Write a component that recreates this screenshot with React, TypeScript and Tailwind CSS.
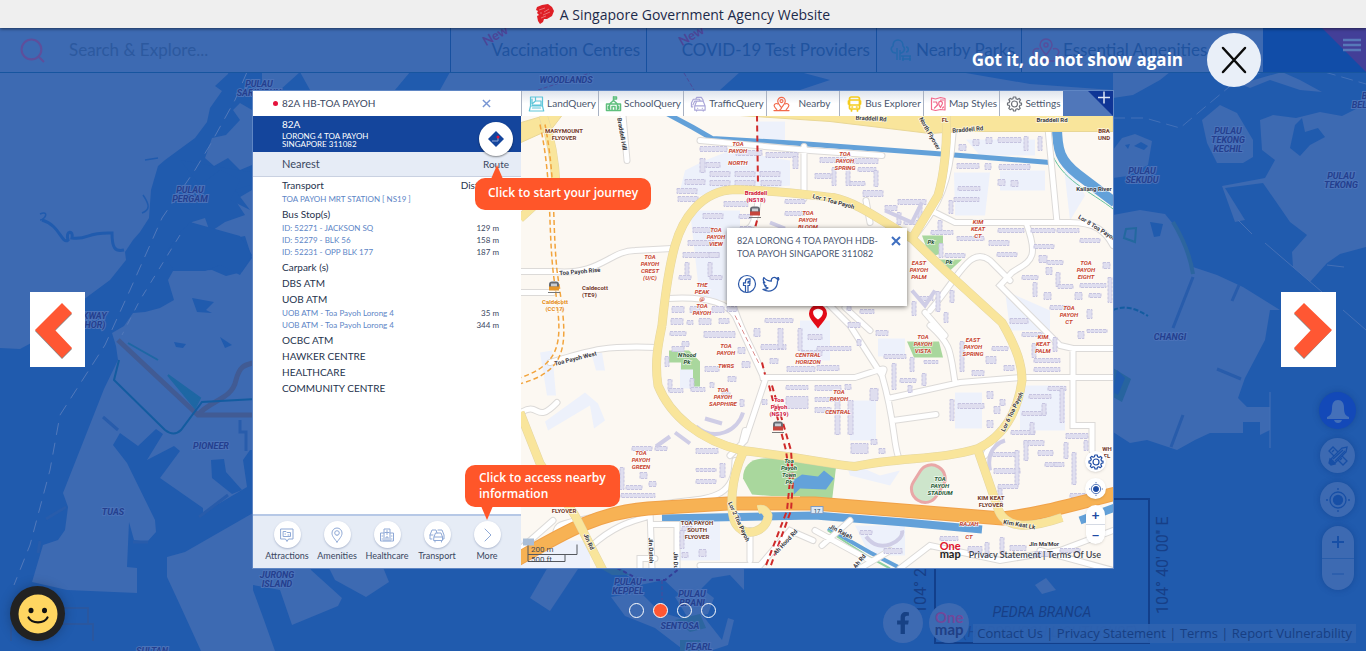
import React from "react";
import { FaFacebookF } from "react-icons/fa";

const LATO = "font-['Lato','Liberation_Sans',sans-serif]";
const SANS = "font-['Open_Sans','Noto_Sans',sans-serif]";

type Label = { x: number; y: number; t: string[]; c?: string; s?: number; r?: number; i?: boolean; a?: "start" | "middle" };

function MapLabels({ items, size, lead, color }: { items: Label[]; size: number; lead: number; color: string }) {
  return (
    <>
      {items.map((l, n) => (
        <text
          key={n}
          x={l.x}
          y={l.y}
          fill={l.c ?? color}
          fontSize={l.s ?? size}
          fontWeight={700}
          fontStyle={l.i === false ? "normal" : "italic"}
          textAnchor={l.a ?? "middle"}
          transform={l.r ? `rotate(${l.r} ${l.x} ${l.y})` : undefined}
        >
          {l.t.map((line, k) => (
            <tspan key={k} x={l.x} dy={k ? lead : 0}>
              {line}
            </tspan>
          ))}
        </text>
      ))}
    </>
  );
}

const ISLAND_LABELS: Label[] = [
  { x: 259, y: 87, t: ["PULAU", "SARIMBUN"] },
  { x: 190, y: 193, t: ["PULAU", "PERGAM"] },
  { x: 566, y: 83, t: ["WOODLANDS"] },
  { x: 88, y: 319, t: ["LINKWAY", "(JOHOR)"] },
  { x: 211, y: 449, t: ["PIONEER"] },
  { x: 113, y: 515, t: ["TUAS"] },
  { x: 277, y: 578, t: ["JURONG", "ISLAND"] },
  { x: 152, y: 654, t: ["SULTAN"] },
  { x: 628, y: 585, t: ["PULAU", "KEPPEL"] },
  { x: 692, y: 597, t: ["PULAU", "BRANI"] },
  { x: 680, y: 629, t: ["SENTOSA"] },
  { x: 699, y: 650, t: ["PEARL"] },
  { x: 1228, y: 134, t: ["PULAU", "TEKONG", "KECHIL"] },
  { x: 1142, y: 174, t: ["PULAU", "SEKUDU"] },
  { x: 1341, y: 179, t: ["PULAU", "TEKONG"] },
  { x: 1374, y: 99, t: ["BUKIT", "BELAKANG"] },
  { x: 1170, y: 340, t: ["CHANGI"] },
];

function IslandMap() {
  return (
    <svg aria-hidden="true" className="absolute inset-0 h-full w-full font-['Roboto',sans-serif]" viewBox="0 28 1366 623" preserveAspectRatio="xMidYMid slice">
      <rect x="0" y="28" width="1366" height="623" fill="#205bae" />
      <g fill="#3d6ab2">
        <path d="M0 28H240L228 74 215 86 222 91 210 108 207 122 195 138 165 160 158 166 151 190 149 218 140 232 133 240 125 252 126 260 110 280 83 300 66 318 50 333 20 349 0 348Z" />
        <path d="M300 72L280 90 262 100 252 110 240 103 233 110 240 120 226 135 212 138 205 158 214 166 228 158 240 170 252 165 252 190 235 200 245 215 225 222 210 232 205 218 192 222 186 232 178 236 200 240 225 240 245 236 252 258 242 272 226 276 212 270 190 271 173 271 168 280 174 300 160 308 145 312 133 313 124 326 112 333 116 346 118 360 104 389 63 493 68 507 65 530 58 540 43 545 32 582 67 590 137 593 137 568 127 567 129 522 134 540 147 542 156 532 155 520 127 463 113 445 120 433 138 446 156 429 163 434 147 460 174 446 180 451 160 478 203 508 203 513 247 487 243 460 250 450 262 450V72Z" />
        <path d="M167 557L185 552 253 513V590L264 620 275 651H201L180 605 167 577Z" />
        <path d="M253 560H308L311 570 342 598 338 606 292 625 280 590 253 585Z" />
        <path d="M325 560H380L389 582 366 597 335 580Z" />
        <path d="M552 560H584L550 611 530 598Z" />
        <path d="M590 560H744V590L730 575 712 578 700 590 680 595 664 580 640 585 617 568Z" />
        <path d="M611 597L640 592 660 612 680 618 700 612 722 640 728 618 734 620 728 645 710 651H685L655 628 625 616Z" />
        <path d="M675 597L698 586 714 598 708 614 688 618Z" />
        <path d="M300 72H410L395 90H310ZM450 72H740L720 90H440ZM800 72H880L960 72 1030 84 1113 90V72H1170L1160 80 1133 95 1113 98V90H800L830 80Z" />
        <path d="M1113 150L1122 138 1135 134 1152 141 1148 165 1128 176 1113 178Z" />
        <path d="M1113 215L1140 210 1165 214 1178 230 1193 267 1217 275 1243 287 1280 310 1270 310 1265 340 1245 378 1238 398 1247 407 1270 407V430L1260 435V422H1243V433L1210 433 1195 440 1177 450 1147 440 1130 443 1113 432Z" />
        <path d="M1202 120L1220 105 1237 113 1253 140 1253 157 1243 163H1217L1207 143Z" />
        <path d="M1260 120L1273 115 1296 118 1320 112 1342 116 1366 104V247L1340 254 1327 263 1310 282 1293 267 1292 252 1307 235 1290 222 1263 183 1225 188 1245 220 1235 222 1222 186 1265 178 1275 160 1262 150Z" />
        <path d="M1240 84L1282 72 1300 80 1322 92 1300 90 1270 80 1250 88Z" />
        <path d="M1035 585L1046 578 1056 590 1042 594Z" />
      </g>
      <g fill="#205bae">
        <path d="M192 298L203 300 214 302 206 310 212 313 197 312ZM174 342L186 344 183 348 176 347ZM220 337L232 345 225 348ZM180 160L200 185 220 170 240 180 230 200 250 210 235 190 250 185 250 172 225 168ZM211 460L224 459 226 472 242 490 232 494 212 478ZM1134 146L1141 142 1148 146 1144 150ZM1125 145L1130 144 1128 149ZM1295 125L1302 118 1305 132 1318 128 1325 137 1310 145 1300 156 1290 148ZM1150 222L1163 224 1160 236 1154 237ZM178 235L190 222 240 236 252 255 240 275 220 265 205 271 174 271 165 255Z" />
      </g>
      <path d="M247 72L235 100 210 145 195 170 162 218 130 290 105 345 60 415 50 470 30 545 14 585" stroke="#5279bb" strokeDasharray="12 8" fill="none" />
      <path d="M180 235L140 300 122 335" stroke="#5279bb" strokeDasharray="8 8" fill="none" />
      <path d="M1113 118L1145 118 1180 128 1235 82 1290 62 1366 84" stroke="#4270b8" strokeDasharray="12 6" fill="none" />
      <path d="M42 220C60 225 62 245 68 240 65 230 74 230 72 238 90 240 85 232 112 233 112 248 115 252 124 250" stroke="#205bae" strokeWidth="3" fill="none" />
      <path d="M145 160 158 158M143 195C150 205 150 210 142 213M40 214C50 210 45 220 40 220" stroke="#205bae" strokeWidth="1.5" fill="none" />
      <path d="M118 340L198 415H255M198 415C210 400 232 400 236 380 240 365 245 365 256 362" stroke="#415b94" strokeWidth="5" fill="none" />
      <path d="M128 343L158 360 M168 375L200 398 195 408Z" stroke="#1e67a4" strokeWidth="2" fill="#1e67a4" />
      <path d="M119 360L114 380 165 430Q174 437 181 430L202 402 256 399" stroke="#135ca0" strokeWidth="2" fill="none" />
      <path d="M103 417L118 430M46 519L66 507M40 541L38 553M133 542H148M199 517L228 495M240 420V432H246V451M1193 277L1173 328M1239 285L1232 301M1217 369L1241 379M1183 415L1171 447" stroke="#285cab" strokeWidth="3" fill="none" />
      <path d="M1265 243L1322 292M1343 310L1366 330M1327 265 1344 267M1238 220 1252 234M1270 392V448" stroke="#4570b6" strokeWidth="1" fill="none" />
      <path d="M1173 222C1184 240 1190 255 1193 274" stroke="#2c659f" strokeWidth="4" fill="none" />
      <path d="M1113 310C1125 305 1135 308 1148 316" stroke="#135ca0" strokeWidth="2" strokeDasharray="5 2" fill="none" />
      <path d="M1113 368L1131 379 1122 402 1113 397Z" fill="#27649f" />
      <path d="M1117 370 1125 378 1118 395 1113 392Z" fill="#205bae" />
      <path d="M1126 229 1136 228 1135 242 1124 238Z" stroke="#23689f" strokeWidth="2" fill="none" />
      <path d="M600 568 620 568 630 575 612 575ZM675 620 700 614 706 628 690 632ZM680 640H700L705 651H680Z" fill="#2c659f" />
      <path d="M617 568 640 580 665 580 680 568" stroke="#333e98" strokeWidth="2" strokeDasharray="4 3" fill="none" />
      <path d="M662 580V600M684 73 694 90M538 90 590 73" stroke="#4a4a99" strokeDasharray="4 2" fill="none" />
      <path d="M935 560V643H1149V499H1113" fill="none" stroke="#123f8b" strokeWidth="2" />
      <g fill="#173f87">
        <text x="1042" y="617" fontSize="14" fontStyle="italic" textAnchor="middle">PEDRA BRANCA</text>
        <text x="1168" y="614" fontSize="16" transform="rotate(-90 1168 614)">104° 40' 00'' E</text>
        <text x="926" y="614" fontSize="16" transform="rotate(-90 926 614)">104° 24' 00'' E</text>
      </g>
      <text x="1050" y="637" fontSize="14" fontStyle="italic" textAnchor="middle" fill="#1c4b98">(HORSBURGH LIGHTHOUSE)</text>
      <path d="M18 608H88V624M11 641V624H93V641" fill="none" stroke="#2a579f" strokeWidth="2" />
      <g stroke="#4a72b9" strokeWidth="2" paintOrder="stroke">
        <MapLabels items={ISLAND_LABELS} size={9} lead={9} color="#243f8e" />
      </g>
    </svg>
  );
}

// x, y, width, height
const BUILDINGS: number[][] = [
  [700,146,27,5],[736,150,26,5],[766,152,32,5],[793,156,5,12],[700,158,5,14],[706,162,14,5],[710,171,20,5],[735,171,20,5],[760,171,20,5],[685,179,20,5],[710,180,20,5],[735,180,20,5],[761,180,20,5],[677,188,20,5],[678,196,20,5],[703,213,20,5],[693,227,20,5],[688,240,26,5],[683,252,36,5],[709,252,10,5],[685,262,4,14],[708,262,4,14],[679,275,12,4],[710,275,12,4],[724,201,24,5],[739,214,12,4],[740,226,12,4],[785,199,20,4],[785,211,20,4],
  [820,157,26,5],[850,158,28,5],[815,173,16,5],[832,167,4,18],[846,167,4,18],[858,167,18,4],[874,170,4,16],[850,181,15,4],[863,190,20,6],[885,205,12,5],[898,199,28,5],[897,212,4,12],[904,220,14,4],[918,206,4,14],
  [959,144,7,6],[973,139,6,6],[986,137,6,6],[998,137,23,5],[1024,136,4,14],[1038,136,4,14],[957,163,22,5],[985,163,6,6],[999,164,31,5],[998,179,7,6],[1011,180,7,6],[958,186,22,4],[954,197,25,4],[949,200,4,13],
  [938,220,4,12],[931,230,22,4],[957,236,27,4],[939,243,4,14],[945,253,20,4],[989,240,20,5],[998,228,26,4],[1031,228,24,4],[1057,228,22,4],[997,252,20,4],[1034,244,20,4],[1039,255,8,7],[1047,260,16,4],[1046,267,6,7],[1022,275,16,4],[1033,282,4,14],[1056,272,4,14],[1058,284,15,4],[1080,283,26,4],[1103,262,7,6],[1080,238,20,4],[1108,277,4,25],[1089,293,12,4],[1044,292,7,7],[1075,292,7,7],[1050,305,20,4],[1010,318,18,5],[1087,309,5,9],
  [672,306,12,6],[690,306,10,6],[712,306,12,6],[671,318,12,6],[687,320,6,4],[699,318,12,6],[719,318,10,5],[765,318,28,4],[727,306,10,5],[670,331,16,4],[682,341,7,5],[704,331,31,6],[672,346,12,5],[665,356,4,10],[668,379,4,11],[669,388,14,4],[690,378,4,10],[691,387,14,4],[705,366,14,5],[742,361,8,6],[738,347,7,6],[728,376,8,5],[710,382,4,5],[722,392,8,5],[740,399,4,7],[632,446,20,4],[655,446,12,4],[696,448,22,5],[720,463,5,14],[696,468,20,3],[696,479,20,4],[620,467,4,22],[626,485,16,4],[621,493,34,4],[640,472,7,6],[649,481,7,5],[754,328,6,8],[761,344,25,5],[778,328,5,20],[798,328,4,22],[802,350,20,5],[808,334,14,5],[770,358,8,5],[787,366,28,5],
  [786,385,22,4],[786,396,22,12],[815,385,26,5],[815,397,25,4],[835,400,5,34],[845,384,6,5],[848,400,5,34],[870,388,8,12],[871,439,6,5],[879,448,6,5],[851,443,17,10],[815,407,16,5],[762,399,5,5],
  [847,302,4,8],[860,309,14,4],[848,322,12,5],[857,339,4,6],[876,330,12,5],[817,346,34,4],[817,365,22,5],[884,354,22,4],[892,363,4,26],[910,357,4,14],[900,378,16,4],[922,373,4,12],[924,360,14,3],[908,385,4,7],[912,301,4,14],[919,296,14,4],[936,291,4,20],[950,290,4,12],[944,312,4,10],[950,399,4,21],[958,403,26,5],[987,391,6,7],[1000,399,5,6],[994,406,6,7],[987,420,6,7],[960,341,4,30],[986,356,10,7],[972,370,12,5],[1004,365,10,5],[992,346,16,4],
  [1022,332,20,4],[1032,343,4,14],[1034,358,26,4],[1034,367,26,4],[1053,337,4,14],[1078,331,6,7],[1087,329,20,3],[1048,386,18,4],[1060,388,4,34],[1029,394,22,4],[1022,411,24,4],[1042,403,4,12],[1011,430,24,4],[1030,422,4,12],[1024,440,20,5],[1024,440,4,20],[1038,450,15,5],[1045,462,14,4],[1066,433,22,5],[1064,442,4,16],[1072,452,4,32],[1084,440,4,10],[1054,462,10,4],[992,452,26,4],[994,468,26,5],[1015,450,4,34],[998,484,20,4],[998,488,4,14],[1070,493,18,4],[682,526,10,4],[680,530,4,18],[699,549,7,7],[682,552,6,5],[860,530,12,4],[884,548,18,5],[940,536,18,4],[968,546,14,6],[985,542,4,14],[1000,537,4,16],[1010,545,16,5],[1035,551,18,5],[1060,548,20,4],
];

const RED_LABELS: Label[] = [
  { x: 738, y: 145, t: ["TOA", "PAYOH"] }, { x: 738, y: 164, t: ["NORTH"] },
  { x: 845, y: 155, t: ["TOA", "PAYOH", "SPRING"] },
  { x: 808, y: 214, t: ["TOA", "PAYOH", "BLOOM"] },
  { x: 716, y: 231, t: ["TOA", "PAYOH", "VIEW"] },
  { x: 650, y: 258, t: ["TOA", "PAYOH", "CREST", "(U/C)"] },
  { x: 702, y: 286, t: ["THE", "PEAK", "@", "TOA", "PAYOH"] },
  { x: 978, y: 223, t: ["KIM", "KEAT", "CT"] },
  { x: 919, y: 264, t: ["EAST", "PAYOH", "PALM"] },
  { x: 1086, y: 264, t: ["TOA", "PAYOH", "EIGHT"] },
  { x: 1069, y: 309, t: ["TOA", "PAYOH", "CT"] },
  { x: 726, y: 347, t: ["TOA", "PAYOH"] }, { x: 726, y: 367, t: ["TWRS"] },
  { x: 723, y: 391, t: ["TOA", "PAYOH", "SAPPHIRE"] },
  { x: 808, y: 356, t: ["CENTRAL", "HORIZON"] },
  { x: 839, y: 393, t: ["TOA", "PAYOH"] }, { x: 838, y: 413, t: ["CENTRAL"] },
  { x: 641, y: 454, t: ["TOA", "PAYOH", "GREEN"] },
  { x: 923, y: 338, t: ["TOA", "PAYOH", "VISTA"] },
  { x: 973, y: 341, t: ["EAST", "PAYOH", "SPRING"] },
  { x: 1043, y: 338, t: ["KIM", "KEAT", "PALM"] },
  { x: 969, y: 525, t: ["RAJAH"] }, { x: 969, y: 538, t: ["CT"] },
];
const BROWN = "#743a2a";
const DARK = "#3a3a42";
const OTHER_LABELS: Label[] = [
  { x: 564, y: 132, t: ["MARYMOUNT", "FLYOVER"], c: BROWN, i: false },
  { x: 564, y: 512, t: ["FLYOVER"], c: BROWN, i: false },
  { x: 697, y: 524, t: ["TOA PAYOH", "SOUTH", "FLYOVER"], c: BROWN, i: false },
  { x: 991, y: 499, t: ["KIM KEAT", "FLYOVER"], c: BROWN, i: false },
  { x: 1104, y: 132, t: ["BRA", "UND"], c: BROWN, i: false },
  { x: 1107, y: 450, t: ["WH", "FL"], c: BROWN, i: false },
  { x: 945, y: 121, t: ["FL"], c: BROWN, i: false },
  { x: 582, y: 289, t: ["Caldecott", "(TE9)"], c: BROWN, i: false, a: "start" },
  { x: 555, y: 303, t: ["Caldecott", "(CC17)"], c: "#e58a12", i: false },
  { x: 756, y: 194, t: ["Braddell", "(NS18)"], c: "#cf1440", i: false },
  { x: 779, y: 401, t: ["Toa", "Payoh", "(NS19)"], c: "#cf1440", i: false },
  { x: 580, y: 273, t: ["Toa Payoh Rise"], c: DARK, r: -5, i: false },
  { x: 576, y: 360, t: ["Toa Payoh West"], c: DARK, r: -14, i: false },
  { x: 833, y: 203, t: ["Lor 1 Toa Payoh"], c: DARK, r: 15, i: false },
  { x: 871, y: 120, t: ["Braddell Rd"], c: DARK, i: false, r: 3 },
  { x: 968, y: 131, t: ["Braddell Rd"], c: DARK, r: -5, i: false },
  { x: 1052, y: 121, t: ["Braddell Rd"], c: DARK, i: false },
  { x: 928, y: 134, t: ["North Flyover"], c: DARK, r: 60, i: false },
  { x: 620, y: 134, t: ["Braddell Hill"], c: DARK, r: 80, i: false },
  { x: 1094, y: 190, t: ["Kallang River"], c: DARK, i: false },
  { x: 1096, y: 229, t: ["Lor 8 Toa Payoh"], c: DARK, r: 32, i: false },
  { x: 1014, y: 412, t: ["Lor 6 Toa Payoh"], c: DARK, r: -64, i: false },
  { x: 1019, y: 526, t: ["Kim Keat Lk"], c: DARK, r: 10, i: false },
  { x: 1044, y: 545, t: ["Jln Ma'Mor"], c: DARK, i: false },
  { x: 840, y: 533, t: ["Jln Rajah"], c: DARK, r: 27, i: false },
  { x: 787, y: 543, t: ["Ah Hood Rd"], c: DARK, r: -47, i: false },
  { x: 861, y: 562, t: ["Ah Rd"], c: DARK, r: -50, i: false },
  { x: 587, y: 542, t: ["Jln Rd"], c: DARK, r: 65, i: false },
  { x: 649, y: 550, t: ["Jln Datoh"], c: DARK, r: 88, i: false },
  { x: 674, y: 565, t: ["Jln Dusun"], c: DARK, r: 88, i: false },
  { x: 737, y: 522, t: ["Lor 2 Toa Payoh"], c: DARK, r: 65, i: false },
  { x: 789, y: 462, t: ["Toa", "Payoh", "Town", "Pk"], c: "#1e5a35" },
  { x: 940, y: 480, t: ["TOA", "PAYOH", "STADIUM"], c: "#1e5a35" },
  { x: 687, y: 356, t: ["N'hood", "Pk"], c: "#1e4a30" },
  { x: 931, y: 243, t: ["Pk"], c: "#1e4a30" },
  { x: 949, y: 263, t: ["Pk"], c: "#1e4a30" },
];

const WHITE_ROADS =
  "M521 271H555C600 275 610 250 635 250L672 248M521 292H553M623 115 627 160M700 140 810 150 882 155M804 146V198M953 133C950 180 940 205 915 235M1048 128 1057 222M935 212 955 222H1070C1095 222 1105 230 1113 245M1026 222C1040 260 1030 260 1012 272L1000 285 1060 345 1073 348H1113M930 310C960 275 970 245 990 260L1010 280M1073 348V425H1092V450M735 310C745 340 760 360 763 377H855C890 366 885 366 882 375C895 420 893 440 898 455M882 375 850 325 815 290M888 398 960 382 1020 377H1113M893 420 936 414M955 382C950 350 952 345 930 325M758 201C755 225 750 230 740 232M668 298C700 296 725 300 735 315L765 380 745 440 730 455M657 347C600 345 590 350 550 362M521 412C540 400 535 425 557 402M655 505C700 496 735 505 735 460M600 515C560 525 555 520 555 540M521 548 553 520M650 510 652 568M652 524H677V568M700 565H760L790 530 813 540M592 545C620 520 640 520 650 515M815 530 870 560M822 545 850 520M860 568 890 550M900 568 930 545 1000 560 1060 550 1113 530M640 568V558H655M750 530V560M870 222 866 200M985 455 1000 430M740 450 745 430M925 312 945 335M1040 550 1113 570M845 307 870 330";

const YELLOW_ROADS =
  "M662 325C664 305 668 270 675 245C682 220 700 190 735 189C780 190 815 195 833 197C860 203 880 220 912 238L945 270 1002 322C1018 350 1022 365 1022 380C1018 410 1005 435 978 448C940 460 900 456 855 466C830 464 810 458 742 450C700 440 670 415 658 385C654 360 659 340 662 325M946 115C948 140 944 175 938 195L912 238M978 450 997 505C1003 530 1030 528 1062 517M743 452C730 480 730 510 735 522C745 540 768 530 768 515C765 508 762 508 758 509M520 412 540 463 575 515 603 570M543 115C552 140 555 160 556 185L520 218";

function TownMap() {
  return (
    <svg aria-hidden="true" className="absolute inset-0 h-full w-full font-['Roboto',sans-serif]" viewBox="521 115 592 453" preserveAspectRatio="xMidYMid slice">
      <rect x="521" y="115" width="592" height="453" fill="#fcf8f2" />
      <g fill="#edf1fb">
        <path d="M685 170 705 160 730 150 790 160V185L700 195 680 190ZM690 210H740V300H700ZM757 121H785V140H757ZM954 172H990L985 215H955ZM1000 170H1045V190H1000ZM966 139H1035V155H980ZM955 392H982V428H955ZM850 400H876V440H850ZM540 352 552 350 556 395H547ZM545 421 585 392 598 403 605 420 594 428 590 405 548 430ZM592 355 602 352 605 370H596ZM1005 290 1050 310V330H1010ZM1062 150 1085 195 1070 220ZM680 365H700V388H680ZM878 338H905V356H878ZM800 320H830V360H800ZM521 540H590V568H521ZM1020 385H1065V430H1020ZM845 460 880 475 900 470 890 485 850 475ZM675 520H720V560H680ZM855 525H905V555H870Z" />
      </g>
      <path d="M743 478C743 466 750 459 762 458L790 457 836 467 832 500 790 497 752 494Z" fill="#a9d79d" />
      <path d="M793 480 802 474 818 476 824 470 834 478 826 489 800 488 794 494Z" fill="#63a2da" />
      <path d="M669 350H689L700 361V386H693V369H681V362H669ZM922 235H943V252L930 257ZM935 259H962L949 271ZM907 341H939L943 357H914Z" fill="#a9d79d" />
      <g fill="none" stroke="#63a1d9">
        <path d="M665 112 693 127 712 138 800 143 935 153 1050 162" strokeWidth="5" />
        <path d="M1057 125C1057 150 1060 160 1078 174L1115 202" strokeWidth="10" />
        <path d="M662 518 815 515 905 522 982 529M1080 520 1115 507" strokeWidth="8" />
        <path d="M828 528 870 552 905 570" strokeWidth="4" />
      </g>
      <path d="M1050 148C1060 180 1090 190 1115 210" fill="none" stroke="#64c29b" />
      <path d="M828 530 868 556 890 568" fill="none" stroke="#8fd0a0" strokeWidth="2" />
      <path d={WHITE_ROADS} fill="none" stroke="#dcdad8" strokeWidth="7" strokeLinecap="round" />
      <path d={WHITE_ROADS} fill="none" stroke="#fff" strokeWidth="5" strokeLinecap="round" />
      <g fill="#dfdeef" stroke="#c6c4e0" strokeWidth="1" strokeDasharray="3 1">
        {BUILDINGS.map(([x, y, w, h], i) => (
          <rect key={i} x={x} y={y} width={w} height={h} />
        ))}
      </g>
      <g fill="none" stroke="#cfcde6" strokeWidth="4">
        <path d="M696 426C715 442 738 430 743 412M705 418 722 423M675 432 690 443M656 446 670 436M990 470C985 445 1005 440 1005 440M866 536C880 555 905 540 902 530M912 290 925 305 935 290M885 210 912 222 922 202M770 222 785 228" />
      </g>
      <path d="M660 506 735 498 800 498" fill="none" stroke="#fff" strokeWidth="5" />
      <path d="M512 562C570 528 600 512 648 508L728 503H815L915 511 1002 518C1040 514 1080 502 1120 492" fill="none" stroke="#f0a24a" strokeWidth="14" />
      <path d="M512 562C570 528 600 512 648 508L728 503H815L915 511 1002 518C1040 514 1080 502 1120 492" fill="none" stroke="#f7b254" strokeWidth="12" />
      <path d="M740 115H1113V131H960L930 133 830 121ZM521 122 545 115H562L552 128 521 142Z" fill="#f9e59b" stroke="#e9d796" />
      <path d={YELLOW_ROADS} fill="none" stroke="#e4d6a2" strokeWidth="9" />
      <path d={YELLOW_ROADS} fill="none" stroke="#f9e59b" strokeWidth="8" />
      <g fill="none" stroke="#f2a43d" strokeWidth="1.5" strokeDasharray="5 3">
        <path d="M540 124C552 180 548 220 553 270C560 330 570 360 521 377M545 124C556 180 552 220 557 270C566 335 575 368 521 383" />
      </g>
      <g fill="none" stroke="#cf2a2a" strokeWidth="2" strokeDasharray="6 4">
        <path d="M757 115 758 185M757 220 755 228M762 362 765 374M769 385 786 450 790 480 787 510 764 570M772 385 791 450 793 480 791 510 769 570" />
      </g>
      <path d="M735 315 760 365" stroke="#dc8f8f" strokeWidth="1" strokeDasharray="5 3" />
      <g transform="rotate(32 929 483)">
        <rect x="915" y="464" width="27" height="39" rx="13" fill="#cde5cb" stroke="#e9a7a7" strokeWidth="3" />
      </g>
      {[[755, 211, "#c6453c"], [778, 426, "#c6453c"], [554, 286, "#e6962a"]].map(([x, y, c], i) => (
        <g key={i} transform={`translate(${x} ${y})`}>
          <path d="M-5 3V-2Q-5 -5 -2 -5H2Q5 -5 5 -2V3Z" fill="#666b72" />
          <rect x="-3" y="-3" width="6" height="3" fill="#c9ced4" />
          <rect x="-5" y="0" width="10" height="4" fill={c as string} />
          <path d="M-6 6H6" stroke="#777" />
        </g>
      ))}
      <g stroke="#fff" strokeWidth="1.5" strokeOpacity="0.7" paintOrder="stroke">
        <MapLabels items={RED_LABELS} size={6} lead={7} color="#c8442f" />
        <MapLabels items={OTHER_LABELS} size={6} lead={7} color="#333" />
      </g>
      <rect x="811" y="506" width="12" height="7" fill="#dbe7f5" stroke="#7f9cc4" />
      <text x="817" y="512" fontSize="6" textAnchor="middle" fill="#245">17</text>
      <rect x="523" y="538" width="11" height="7" fill="#a9bdd6" />
      <path d="M528 545V561H565V554M528 554H577V544" fill="none" stroke="#55585e" strokeWidth="1" />
      <g fill="#444a52" fontSize="8">
        <text x="531" y="551">200 m</text>
        <text x="531" y="561">500 ft</text>
      </g>
      <path d="M818 328C813 321 809 318 809 313A9 9 0 0 1 827 313C827 318 823 321 818 328Z" fill="#e30b17" />
      <path d="M818 319C815 317 813 315 813 311A6 6 0 0 1 823 311C823 315 821 317 818 319Z" fill="#fff" />
    </svg>
  );
}

type IconProps = { className?: string };
const stroke = { fill: "none", stroke: "currentColor", strokeWidth: 1.2, strokeLinejoin: "round" as const, strokeLinecap: "round" as const };

const LandIcon = ({ className }: IconProps) => (
  <svg viewBox="0 0 16 16" className={className} {...stroke}><path d="M2 1H14V10H2ZM2 10 0.8 15H15.2L14 10M4 12H12M3.5 3V8L7 5H12.5V9H7L4 9M7 1V4" /></svg>
);
const SchoolIcon = ({ className }: IconProps) => (
  <svg viewBox="0 0 16 16" className={className} {...stroke} strokeWidth={1.5}><path d="M8 0.8V5M8 1H11V3H8M4 8 8 4.5 12 8M4 8V14M12 8V14M1 8H15V14.5H1ZM3 10.5V12.5M13 10.5V12.5M6.5 14V10.5H9.5V14M6 8H10" /></svg>
);
const TrafficIcon = ({ className }: IconProps) => (
  <svg viewBox="0 0 18 16" className={className} {...stroke}><path d="M5 10 7 5H14L16 10V14.5H5ZM7 14.5V15.5M14 14.5V15.5M5 10H16M3 11H1.5V7L3.5 3H10L11 5M3 9 5 5H8M6 3 7 1H12L14 4M8 12.5H8.2M13 12.5H13.2" /></svg>
);
const NearbyIcon = ({ className }: IconProps) => (
  <svg viewBox="0 0 18 16" className={className} {...stroke}><path d="M9 12C6 8 5 7 5 5A4 4 0 0 1 13 5C13 7 12 8 9 12ZM9 6.5A1.6 1.6 0 1 0 9 3.3A1.6 1.6 0 0 0 9 6.5M4 14C1.5 11 1.2 10.5 1.2 9.5A2.4 2.4 0 0 1 5 8M14 14C16.5 11 16.8 10.5 16.8 9.5A2.4 2.4 0 0 0 13 8M1 15H17M7 15C7 13 9 14 9 12" /></svg>
);
const BusIcon = ({ className }: IconProps) => (
  <svg viewBox="0 0 14 16" className={className} {...stroke} strokeWidth={1.7}><path d="M4 1H10Q12 1 12 3V12Q12 13 11 13H3Q2 13 2 12V3Q2 1 4 1ZM2 4H12M2 9H12M4 13V15M10 13V15M1 5V8M13 5V8M4.5 11H5M9 11H9.5" /></svg>
);
const StylesIcon = ({ className }: IconProps) => (
  <svg viewBox="0 0 16 16" className={className} {...stroke}><path d="M1 2 5 3 10 1.5 14.5 2.5V14L10 13.5 5 14.5 1 13.5ZM3 6H6L7 9 4 12M10 11.5C7.5 8 8 7 8.5 6A2 2 0 0 1 12 7C12 9 10 10 10 11.5M10 4 13 4M12 12 13 11" /></svg>
);
const GearIcon = ({ className }: IconProps) => (
  <svg viewBox="0 0 16 16" className={className} {...stroke}>
    <circle cx="8" cy="8" r="3" />
    <path d="M6.8 1H9.2L9.6 2.8 11 3.4 12.6 2.4 14 4 13 5.4 13.4 6.8 15 7.2V9L13.3 9.4 12.8 10.8 13.7 12.3 12.3 13.7 10.8 12.8 9.4 13.3 9 15H7L6.6 13.3 5.2 12.8 3.7 13.7 2.3 12.3 3.2 10.8 2.7 9.4 1 9V7L2.7 6.6 3.3 5.2 2.3 3.7 3.7 2.3 5.2 3.2 6.5 2.7Z" />
  </svg>
);
const TargetIcon = ({ className }: IconProps) => (
  <svg viewBox="0 0 24 24" className={className} fill="none" stroke="currentColor" strokeWidth="1.3"><circle cx="12" cy="12" r="8" /><circle cx="12" cy="12" r="4.5" fill="currentColor" /><path d="M12 0V2M12 22V24M0 12H2M22 12H24" /></svg>
);

const TABS = [
  { label: "LandQuery", Icon: LandIcon, color: "text-[#5fc6d9]", w: "w-[77px]" },
  { label: "SchoolQuery", Icon: SchoolIcon, color: "text-[#5fbf7d]", w: "w-[85px]" },
  { label: "TrafficQuery", Icon: TrafficIcon, color: "text-[#a9a5d8]", w: "w-[83px]" },
  { label: "Nearby", Icon: NearbyIcon, color: "text-[#f2694b]", w: "w-[73px]" },
  { label: "Bus Explorer", Icon: BusIcon, color: "text-[#f5cc1e]", w: "w-[84px]" },
  { label: "Map Styles", Icon: StylesIcon, color: "text-[#f2698c]", w: "w-[76px]" },
  { label: "Settings", Icon: GearIcon, color: "text-[#6b6f77]", w: "w-[64px]" },
];

const NEARBY: { title: string; rows?: [string, string][] }[] = [
  { title: "Transport", rows: [["TOA PAYOH MRT STATION [ NS19 ]", ""]] },
  { title: "Bus Stop(s)", rows: [["ID: 52271 - JACKSON SQ", "129 m"], ["ID: 52279 - BLK 56", "158 m"], ["ID: 52231 - OPP BLK 177", "187 m"]] },
  { title: "Carpark (s)" },
  { title: "DBS ATM" },
  { title: "UOB ATM", rows: [["UOB ATM - Toa Payoh Lorong 4", "35 m"], ["UOB ATM - Toa Payoh Lorong 4", "344 m"]] },
  { title: "OCBC ATM" },
  { title: "HAWKER CENTRE" },
  { title: "HEALTHCARE" },
  { title: "COMMUNITY CENTRE" },
];

const CATEGORIES = [
  { label: "Attractions", d: "M2 2H14V12H9.5L8 14.5 6.5 12H2ZM4.5 4.5H7L8 5.5H11.5V9.5H4.5ZM6 7H6.5M9 8H10" },
  { label: "Amenities", d: "M8 15C4 10 3 8.500 3 6A5 5 0 0 1 13 6C13 8.500 12 10 8 15ZM8 8.300A2.300 2.300 0 1 0 8 3.700A2.300 2.300 0 0 0 8 8.300" },
  { label: "Healthcare", d: "M5 14V2H11V14M5 6H1.500V14H14.500V6H11M8 3.500V7.500M6 5.500H10M7 14V10H9V14M3 9H3.500M12.500 9H13M3 12H3.500M12.500 12H13" },
  { label: "Transport", d: "M5 10 6.500 6H12L13.500 10V13.500H5ZM6 13.500V15M12.500 13.500V15M5 10H13.500M3 12H1V8L3 3H7L8 6M9 3H13L15 8V12H14M1 8H4" },
  { label: "More", d: "M6 2 12 8 6 14" },
];

function Sidebar() {
  return (
    <aside className={`flex w-[268px] shrink-0 flex-col bg-white text-[#3a4761] ${LATO}`}>
      <div className="flex h-[25px] items-center pl-5 pr-[30px] text-[10px]">
        <span className="mr-1 size-[5px] rounded-full bg-[#e5133d]" />
        <span className="flex-1">82A HB-TOA PAYOH</span>
        <button aria-label="Clear search" className="text-[#7795d3]">
          <svg viewBox="0 0 10 10" className="size-[9px]" stroke="currentColor" strokeWidth="1.6"><path d="M1 1 9 9M9 1 1 9" /></svg>
        </button>
      </div>
      <div className="flex h-9 justify-between bg-[#14459c] pl-[29px] pr-2 text-white">
        <div className="pt-0.5 text-[8px] leading-2">
          <p className="pb-0.5 text-[10px] leading-3">82A</p>
          <p>LORONG 4 TOA PAYOH</p>
          <p>SINGAPORE 311082</p>
        </div>
        <button aria-label="Route" className="relative z-10 mt-1.5 flex size-[34px] shrink-0 items-center justify-center rounded-full bg-white shadow-[0_1px_2px_rgba(0,0,0,0.45)]">
          <svg viewBox="0 0 18 18" className="size-[18px]"><path d="M9 1 17 9 9 17 1 9Z" fill="#14459c" /><path d="M5 11H11V7" stroke="#8fa8d8" fill="none" /><circle cx="11" cy="7" r="1.500" fill="#e5133d" /></svg>
        </button>
      </div>
      <div className="flex h-[25px] items-center justify-between border-b border-[#c9d1e1] bg-[#e6ecf6] pl-[29px] pr-3 text-[11px]">
        <span>Nearest</span>
        <span className="text-[10px]">Route</span>
      </div>
      <div className="flex flex-1 flex-col pl-[29px] pr-[22px]">
        {NEARBY.map((s, i) => (
          <section key={s.title} className="text-[8px] leading-3">
            <h3 className="flex justify-between text-[10px] leading-4 text-[#26334d]">
              {s.title}
              {i === 0 && <span>Distance</span>}
            </h3>
            {s.rows && (
              <ul className="pb-px">
                {s.rows.map(([a, b], k) => (
                  <li key={k} className="flex justify-between">
                    <a href="#" className="text-[#5c85c6]">{a}</a>
                    <span>{b}</span>
                  </li>
                ))}
              </ul>
            )}
          </section>
        ))}
      </div>
      <div className="flex h-[54px] items-start justify-between border-t-2 border-[#b6c8e6] bg-[#e6ecf6] px-3 pt-[5px] text-[9px] leading-3">
        {CATEGORIES.map((c) => (
          <button key={c.label} className="flex min-w-[44px] flex-col items-center gap-0.5">
            <span className="flex size-[27px] items-center justify-center rounded-full bg-white shadow-[0_1px_2px_rgba(60,80,130,0.35)]">
              <svg viewBox="0 0 16 16" className="size-4 text-[#8fa9d6]" {...stroke} strokeWidth={1}><path d={c.d} /></svg>
            </span>
            {c.label}
          </button>
        ))}
      </div>
    </aside>
  );
}

function OneMapMark({ className, accent }: IconProps & { accent: string }) {
  return (
    <span className={`flex flex-col items-center font-['Lato',sans-serif] ${className}`}>
      <span className={accent}>One</span>
      <span>map</span>
    </span>
  );
}

function Guide() {
  return (
    <section className="relative flex w-full max-w-[860px] min-h-[477px] ring-1 ring-[#5f86c4]">
      <Sidebar />
      <div className={`flex min-w-0 flex-1 flex-col ${LATO}`}>
        <div className="flex h-[25px] text-[10px] text-[#4a566d]">
          {TABS.map(({ label, Icon, color, w }) => (
            <button key={label} className={`flex ${w} shrink-0 items-center border-l border-[#a9b2c3] bg-gradient-to-b from-[#dfe4ec] via-white to-white pl-1.5`}>
              <Icon className={`h-4 w-[17px] shrink-0 ${color}`} />
              <span className="flex-1 whitespace-nowrap text-center">{label}</span>
            </button>
          ))}
          <button aria-label="Open menu" className="flex flex-1 justify-end bg-[#5077ba]">
            <svg viewBox="0 0 25 25" className="size-[25px]"><path d="M0 0H25V25Z" fill="#0f3596" /><path d="M10 6.500H22M16 0.500V12.500" stroke="#dfe7f5" strokeWidth="1.500" /></svg>
          </button>
        </div>
        <div className="relative flex-1 overflow-hidden">
          <TownMap />
          <div className="absolute left-[206px] top-[112px] h-[78px] w-[180px] bg-white px-2.5 py-1.5 text-[9px] leading-[13px] text-[#4a5670] shadow-[0_1px_5px_rgba(0,0,0,0.55)]">
            <div className="flex items-start justify-between">
              <p className="whitespace-nowrap">82A LORONG 4 TOA PAYOH HDB-<br />TOA PAYOH SINGAPORE 311082</p>
              <button aria-label="Close address" className="-mr-1 pt-0.5 text-[#3f6fc0]">
                <svg viewBox="0 0 10 10" className="size-2.5" stroke="currentColor" strokeWidth="2"><path d="M1 1 9 9M9 1 1 9" /></svg>
              </button>
            </div>
            <div className="mt-3.5 flex gap-1 text-[#2a57a8]">
              <svg viewBox="0 0 20 20" className="size-5" fill="none" stroke="currentColor" strokeWidth="1.200"><circle cx="10" cy="10" r="8.500" /><path d="M8.500 18V11.500H6.500V8.800H8.500V7.300Q8.500 4.800 11 4.800H13V7.300H11.700Q11 7.300 11 8V8.800H13L12.600 11.500H11V18" /></svg>
              <svg viewBox="0 0 20 20" className="size-5" fill="none" stroke="currentColor" strokeWidth="1.300" strokeLinejoin="round"><path d="M18 5 16.300 5.400 17.400 3.600 15.400 4.400C13 2 9.800 4.200 10.300 7.200 7 7.100 4.600 5.600 2.900 3.600 1.700 5.900 2.600 7.600 3.800 8.600L2.400 8.200C2.600 10.200 3.700 11.300 5.200 11.800H3.700C4.300 13.200 5.400 13.900 7 14 5.400 15.200 3.600 15.500 2 15.400 9 19.500 16.500 15.500 16.500 7.200Z" /></svg>
            </div>
          </div>
          <div className="absolute bottom-6 right-[7px] flex flex-col items-center gap-1.5 text-[#1d4ba4]">
            <button aria-label="Map settings" className="flex size-[21px] items-center justify-center rounded-full bg-white shadow"><GearIcon className="size-4" /></button>
            <button aria-label="My location" className="flex size-[21px] items-center justify-center rounded-full bg-white shadow"><TargetIcon className="size-3.5" /></button>
            <div className="flex w-[19px] flex-col divide-y divide-[#d5dae4] rounded-full bg-white text-[14px] font-bold leading-[19px] shadow">
              <button aria-label="Zoom map in">+</button>
              <button aria-label="Zoom map out">−</button>
            </div>
          </div>
          <div className="absolute bottom-1 right-3 flex items-center gap-2 text-[9px] leading-3 text-[#40454f]">
            <OneMapMark accent="text-[#e0142c]" className="pb-1.5 text-[11px] font-bold leading-2 text-[#222]" />
            <p className="pt-1 font-semibold"><a href="#">Privacy Statement</a> | <a href="#">Terms Of Use</a></p>
          </div>
        </div>
      </div>
      <div className={`absolute left-[222px] top-[87px] z-20 rounded-[10px] bg-[#ff5629] px-[13px] pb-[7px] pt-[5px] text-[12px] font-semibold leading-5 whitespace-nowrap text-white ${SANS}`}>
        <svg viewBox="0 0 12 14" className="absolute -top-[13px] left-4 h-3.5 w-3"><path d="M6 0 12 14H0Z" fill="#ff5629" /></svg>
        Click to start your journey
      </div>
      <div className={`absolute bottom-[61px] left-[212px] z-20 rounded-[10px] bg-[#ff5629] px-3.5 py-[5px] text-[12px] font-semibold leading-4 whitespace-nowrap text-white ${SANS}`}>
        Click to access nearby<br />information
        <svg viewBox="0 0 12 14" className="absolute -bottom-[13px] left-4 h-3.5 w-3"><path d="M6 14 12 0H0Z" fill="#ff5629" /></svg>
      </div>
    </section>
  );
}

function SiteNav() {
  const cell = "relative flex shrink-0 items-center border-l border-[#17509f]";
  return (
    <nav className={`relative flex h-[45px] border-b border-[#17559f] bg-[#3d6ab2] text-[17px] text-[#1f539f] ${LATO}`}>
      <div className="flex flex-1 items-center gap-6 pl-5">
        <svg viewBox="0 0 24 24" className="size-[25px]" fill="none" stroke="#5e4f9c" strokeWidth="2"><circle cx="11" cy="11" r="9.500" /><path d="M18 18 23 23" /></svg>
        <input aria-label="Search" placeholder="Search & Explore..." className="w-60 bg-transparent outline-none placeholder:text-[#2c599f]" />
      </div>
      <a href="#" className={`${cell} w-[196px] justify-end pr-1.5`}>
        <span className="absolute left-[31px] -top-0.5 -rotate-[30deg] text-[13px] font-bold text-[#4c4597]">New</span>
        Vaccination Centres
      </a>
      <a href="#" className={`${cell} w-[230px] justify-end pr-1.5`}>
        <span className="absolute left-[31px] -top-0.5 -rotate-[30deg] text-[13px] font-bold text-[#4c4597]">New</span>
        COVID-19 Test Providers
      </a>
      <a href="#" className={`${cell} w-[145px] justify-between pl-3 pr-1.5`}>
        <svg viewBox="0 0 22 24" className="size-6" fill="none" stroke="#2468ad" strokeWidth="1.500"><path d="M6 15C1 15 0 10 3 8 3 3 6 2 8 2 12 2 13 6 13 8 16 11 14 15 10 15M7 10V22M10 12V22M11 18H21M12 21H21M13 18V23M20 18V23M16 9C19 9 19 14 16 14" /></svg>
        Nearby Parks
      </a>
      <a href="#" className={`${cell} w-[242px] gap-[3px] pl-2.5`}>
        <svg viewBox="0 0 28 24" className="h-6 w-7" fill="none" stroke="#564f9d" strokeWidth="1.500"><path d="M14 17C9 11 8 9 8 7A6 6 0 0 1 20 7C20 9 19 11 14 17ZM14 9A2 2 0 1 0 14 5A2 2 0 0 0 14 9M6 21C2 17 1 16 1 14A4 4 0 0 1 7 11M22 21C26 17 27 16 27 14A4 4 0 0 0 21 11M4 23H24" /></svg>
        Essential Amenities
      </a>
      <button aria-label="Menu" className="relative flex w-[103px] shrink-0 justify-end bg-[#114da8]">
        <svg viewBox="0 0 44 44" className="size-11"><path d="M0 0H44V44Z" fill="#433f98" /><path d="M21 12H39M21 17H39M21 22H39" stroke="#5779b9" strokeWidth="2.500" /></svg>
      </button>
    </nav>
  );
}

function MapControls() {
  const round = "flex items-center justify-center rounded-full shadow-[0_0_6px_rgba(10,50,120,0.4)]";
  return (
    <div className="absolute right-2.5 top-[364px] flex flex-col items-center gap-[9px] text-[#174fa6]">
      <button aria-label="Notifications" className={`${round} size-[37px] bg-[#1349b8]`}>
        <svg viewBox="0 0 24 26" className="h-[26px] w-6" fill="#4470b9"><path d="M12 0V2M12 2C16 2 18 5 18 10 18 16 20 18 23 19V21H1V19C4 18 6 16 6 10 6 5 8 2 12 2Z" /><path d="M8 22H16Q15 25 12 25 9 25 8 22Z" /></svg>
      </button>
      <button aria-label="Drawing tools" className={`${round} size-[35px] bg-[#3d6ab2]`}>
        <svg viewBox="0 0 20 20" className="size-5" fill="none" stroke="currentColor" strokeWidth="1.300"><path d="M1 5 5 1 19 15 15 19ZM4 6 6 4M8 10 10 8M12 14 14 12" /><path d="M3 13 14 2 19 1 18 6 7 17Z" fill="#3d6ab2" /><path d="M2 13 7 18 3 19 1 17ZM5 13 15 4M7 15 17 5" fill="currentColor" /></svg>
      </button>
      <button aria-label="Locate me" className={`${round} size-[35px] bg-[#3d6ab2]`}><TargetIcon className="size-6" /></button>
      <div className="flex h-16 w-8 flex-col divide-y divide-[#285dab] rounded-full bg-[#3d6ab2] shadow-[0_0_6px_rgba(10,50,120,0.4)]">
        <button aria-label="Zoom in" className="flex flex-1 items-center justify-center"><svg viewBox="0 0 12 12" className="size-3" stroke="currentColor" strokeWidth="2"><path d="M0 6H12M6 0V12" /></svg></button>
        <button aria-label="Zoom out" className="flex flex-1 items-center justify-center"><svg viewBox="0 0 12 12" className="size-3" stroke="#285dab" strokeWidth="1.500"><path d="M0 6H12" /></svg></button>
      </div>
    </div>
  );
}

export default function App() {
  return (
    <div className="relative flex min-h-screen flex-col overflow-hidden bg-[#205bae]">
      <header className={`relative z-20 flex h-7 items-center justify-center gap-1.5 bg-[#efefef] text-[14px] text-[#1c2a4a] shadow-[0_1px_3px_rgba(0,0,0,0.5)] ${SANS}`}>
        <svg viewBox="0 0 18 20" className="h-5 w-[18px]"><path d="M1 3 6 1 12 0 16 3 18 7 16 12 11 15 8 15 7 18 4 20 2 17 1 12 3 11 1 9 2 7 0 6Z" fill="#df1f26" /><path d="M3 6 9 4M8 8 13 5M7 11 14 8M5 14 10 12M4 9H6" stroke="#fff" strokeOpacity="0.6" strokeWidth="0.600" /></svg>
        A Singapore Government Agency Website
      </header>

      <div className="relative flex-1">
        <IslandMap />
        <div className="absolute inset-0 flex flex-col justify-between">
          <SiteNav />
          <footer className="flex items-end justify-end pb-2 pr-2.5">
            <a href="#" aria-label="Facebook" className="mr-1.5 flex size-10 items-center justify-center rounded-full bg-[#3d6ab2] text-[22px] text-[#174185]"><FaFacebookF /></a>
            <a href="#" className="mr-1 flex size-10 items-center justify-center rounded-full bg-[#3d6ab2]">
              <OneMapMark accent="text-[#70489a]" className="text-[15px] font-bold leading-3 text-[#203f85]" />
            </a>
            <p className={`bg-[#2f63b0]/90 px-1 text-[13px] leading-[19px] text-[#173f83] ${SANS}`}>
              <a href="#">Contact Us</a> | <a href="#">Privacy Statement</a> | <a href="#">Terms</a> | <a href="#">Report Vulnerability</a>
            </p>
          </footer>
        </div>
        <MapControls />

        <main className="relative z-10 flex flex-col">
          <div className="flex items-center justify-end gap-6 pb-1 pr-[105px] pt-[5px]">
            <button className={`text-[17px] font-bold text-white ${SANS}`}>Got it, do not show again</button>
            <button aria-label="Close guide" className="flex size-[54px] items-center justify-center rounded-full bg-[#e9eff8]">
              <svg viewBox="0 0 26 28" className="h-7 w-[26px]" stroke="#0b0b0b" strokeWidth="2.500" strokeLinecap="round"><path d="M2 2 24 26M24 2 2 26" /></svg>
            </button>
          </div>
          <div className="flex items-center justify-between px-[30px]">
            <button aria-label="Previous slide" className="h-[75px] w-[55px] shrink-0 bg-white">
              <svg viewBox="0 0 55 75" className="h-full w-full"><path d="M32 12 42 22 25 39 42 57 32 67 5 39Z" fill="#888" /><path d="M32 11 42 21 25 38 42 56 32 66 5 38Z" fill="#ff5733" /></svg>
            </button>
            <Guide />
            <button aria-label="Next slide" className="h-[75px] w-[55px] shrink-0 bg-white">
              <svg viewBox="0 0 55 75" className="h-full w-full"><path d="M23 12 13 22 30 39 13 57 23 67 50 39Z" fill="#888" /><path d="M23 11 13 21 30 38 13 56 23 66 51 38Z" fill="#ff5733" /></svg>
            </button>
          </div>
          <div className="mx-auto mt-[35px] flex gap-[9px] pr-[22px]">
            {[0, 1, 2, 3].map((n) => (
              <button key={n} aria-label={`Slide ${n + 1}`} className={`size-[15px] rounded-full border border-white ${n === 1 ? "bg-[#ff5733]" : ""}`} />
            ))}
          </div>
        </main>

        <button aria-label="Open chat" className="absolute bottom-2.5 left-2.5 z-20 flex size-[55px] items-center justify-center rounded-full bg-[#222] shadow-[0_0_12px_rgba(0,0,0,0.25)]">
          <svg viewBox="0 0 40 40" className="size-10"><circle cx="20" cy="20" r="19.500" fill="#ffd661" /><ellipse cx="13" cy="16.500" rx="2.500" ry="2.700" fill="#111" /><ellipse cx="26.500" cy="16.500" rx="2.500" ry="2.700" fill="#111" /><path d="M10.500 23.500C14 30 26 30 29.500 23.500" fill="none" stroke="#111" strokeWidth="2.200" strokeLinecap="round" /></svg>
        </button>
      </div>
    </div>
  );
}
